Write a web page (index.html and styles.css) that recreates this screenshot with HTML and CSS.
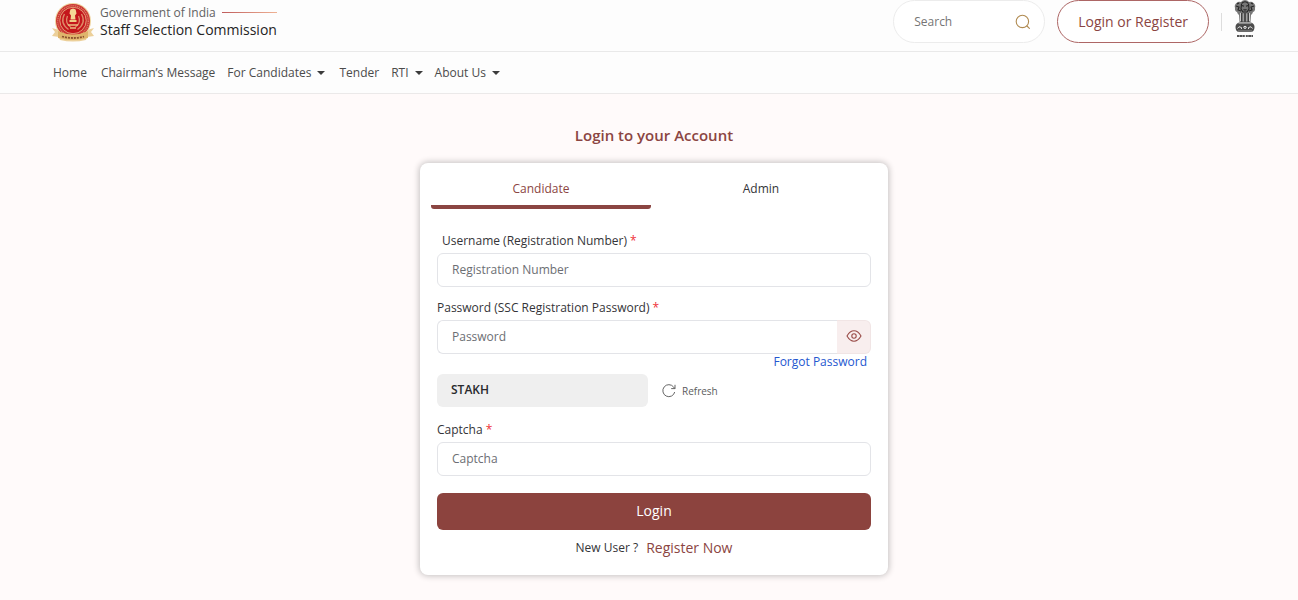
FILE: index.html
```html
<!DOCTYPE html>
<html lang="en">
<head>
<meta charset="utf-8">
<meta name="viewport" content="width=device-width, initial-scale=1">
<title>Staff Selection Commission - Login</title>
<link rel="stylesheet" href="styles.css">
</head>
<body>
<header class="topbar">
  <a class="brand" href="#">
    <svg class="seal" viewBox="0 0 44 40" aria-hidden="true">
      <path d="M8 28 1 26l3 4-3 4 7 1 1 3q13 3 26 0l1-3 7-1-3-4 3-4-7 2z" fill="#ecd09a"/>
      <circle cx="22" cy="19" r="18" fill="#efd49e"/>
      <circle cx="22" cy="19" r="17" fill="#cc3634"/>
      <circle cx="22" cy="19" r="15.300" fill="none" stroke="#dd8a6c" stroke-width="1.200" stroke-dasharray="1 1"/>
      <circle cx="22" cy="18.500" r="13.200" fill="#c4161c" stroke="#e9b988" stroke-width=".8"/>
      <path d="M13.500 12q-5 9 4 15.500M30.500 12q5 9-4 15.500M16.500 14q-3 7 3 11M27.500 14q3 7-3 11" fill="none" stroke="#de8a68" stroke-width="1.300"/>
      <path d="M19 9q0-2 1.500-2 1.500-1 3 0Q25 7 25 9l.5 2.500-1.500 2 .5 4h-5l.5-4-1.500-2z" fill="#f5d996"/>
      <path d="M18.500 18h7v2h-7z" fill="#f0ca84"/>
      <path d="M17 23h10M19 26h6" stroke="#eabc80" stroke-width="1.400"/>
      <path d="M7 29q15 7 30 0v7q-15 4-30 0z" fill="#dfb56c"/>
      <path d="M11 34.500q11 3 22 0" fill="none" stroke="#8b5230" stroke-width="1.800" stroke-dasharray="2 1"/>
    </svg>
    <span class="brand-text">
      <span class="brand-top">Government of India <i class="brand-line"></i></span>
      <span class="brand-name">Staff Selection Commission</span>
    </span>
  </a>
  <div class="actions">
    <form class="search" role="search">
      <input class="search-input" type="search" placeholder="Search" aria-label="Search">
      <button class="icon-button search-button" type="button" aria-label="Search">
        <svg width="16" height="16" viewBox="0 0 16 16" fill="none" stroke="#b08a50" stroke-width="1.1" stroke-linecap="round"><circle cx="7.4" cy="7.4" r="6.2"/><path d="m12 12 2.4 2.4"/></svg>
      </button>
    </form>
    <a class="login-link" href="#">Login or Register</a>
    <span class="divider"></span>
    <svg class="emblem" viewBox="0 0 22 38" role="img" aria-label="National emblem">
      <path d="M7 2q1.500-2 4-2t4 2q3-1 4.500 1Q22 5 21 8q.5 3-2 4-.5 2-2 3l-.5 7H5.500L5 15q-1.500-1-2-3Q.5 11 1 8 0 5 2.500 3 4 1 7 2z" fill="#777"/>
      <path d="M7.500 3.500Q11 0 14.500 3.500M8 5.500l2 .7m2 0 2-.7M9.500 9.500q1.500 1 3 0M7.500 4l-.5 5 2 3h4l2-3-.5-5M2 6l3 1-1 3 3 1M20 6l-3 1 1 3-3 1M3 4l2-1M19 4l-2-1" fill="none" stroke="#262626" stroke-width="1.100"/>
      <path d="M6.500 13v8M9 13.500V21M13 13.500V21M15.500 13v8" stroke="#d4d4d4" stroke-width=".9"/>
      <path d="M7.800 13v9M11 13v9M14.200 13v9" stroke="#333" stroke-width="1.200"/>
      <path d="M5 22.500h12q3.500 1 3.500 4.500 0 5-4 5h-11q-4 0-4-5 0-3.500 3.500-4.500z" fill="#4c4c4c"/>
      <path d="M4.500 23.500h13M4 31h14" stroke="#aaa" stroke-width=".7"/>
      <circle cx="11" cy="27.300" r="2.100" fill="#eee" stroke="#222" stroke-width=".8"/>
      <circle cx="11" cy="27.300" r=".6" fill="#333"/>
      <path d="M3.500 28.500q1-3 4-1v1.500M18.500 28.500q-1-3-4-1v1.500" fill="none" stroke="#ddd"/>
      <path d="M3 36h16" stroke="#555" stroke-width="1.800" stroke-dasharray="2 .4 3 .4 2 1"/>
    </svg>
  </div>
</header>
<nav class="nav" aria-label="Main">
  <a class="nav-link nav-spaced" href="#">Home</a>
  <a class="nav-link" href="#">Chairman’s Message</a>
  <a class="nav-link nav-spaced" href="#">For Candidates <i class="caret"></i></a>
  <a class="nav-link" href="#">Tender</a>
  <a class="nav-link" href="#">RTI <i class="caret"></i></a>
  <a class="nav-link" href="#">About Us <i class="caret"></i></a>
</nav>
<main class="main">
  <h1 class="title">Login to your Account</h1>
  <section class="card">
    <div class="tabs" role="tablist">
      <button class="tab tab-active" type="button" role="tab" aria-selected="true">Candidate</button>
      <button class="tab" type="button" role="tab" aria-selected="false">Admin</button>
    </div>
    <form class="form">
      <label class="label label-inset" for="username">Username (Registration Number) <span class="required">*</span></label>
      <input class="field" id="username" type="text" placeholder="Registration Number">
      <label class="label label-next" for="password">Password (SSC Registration Password) <span class="required">*</span></label>
      <div class="password">
        <input class="field password-field" id="password" type="password" placeholder="Password">
        <button class="icon-button reveal" type="button" aria-label="Show password">
          <svg width="16" height="12" viewBox="0 0 16 12" fill="none" stroke="#994c48" stroke-width="1.1"><path d="M1 6Q4 .8 8 .8T15 6Q12 11.200 8 11.200T1 6z"/><circle cx="8" cy="6" r="2.200"/></svg>
        </button>
      </div>
      <a class="forgot" href="#">Forgot Password</a>
      <div class="captcha-row">
        <output class="captcha-code">STAKH</output>
        <button class="icon-button refresh" type="button">
          <svg width="14" height="14" viewBox="0 0 14 14" fill="none" stroke="#666" stroke-width="1"><path d="M12.700 8A6 6 0 1 1 11.600 3L13 4.600M13 .8v3.800H9.200"/></svg>
          Refresh
        </button>
      </div>
      <label class="label label-captcha" for="captcha">Captcha <span class="required">*</span></label>
      <input class="field" id="captcha" type="text" placeholder="Captcha">
      <button class="submit" type="button">Login</button>
      <p class="register">New User ? <a class="register-link" href="#">Register Now</a></p>
    </form>
  </section>
</main>
</body>
</html>
```
FILE: styles.css
```css
* { box-sizing: border-box; }
body {
  margin: 0;
  min-height: 100vh;
  background: #fffafa;
  color: #343438;
  font-family: "Open Sans", "Noto Sans", sans-serif;
  font-size: 12px;
  line-height: 20px;
}
a { color: inherit; text-decoration: none; }
button, input { font: inherit; color: inherit; }
.topbar {
  display: flex;
  align-items: flex-start;
  justify-content: space-between;
  height: 52px;
  padding: 0 42px 0 51px;
  background: #fdfdfd;
  border-bottom: 1px solid #e9e9e9;
}
.brand { display: flex; gap: 5px; padding-top: 2px; }
.seal { width: 44px; height: 40px; }
.brand-text { display: flex; flex-direction: column; padding-top: 2px; line-height: 17px; }
.brand-top { display: flex; align-items: center; gap: 6px; color: #626262; }
.brand-line { flex: 1; height: 1px; background: linear-gradient(90deg, #bf5c5c, #efb294); }
.brand-name { font-size: 14px; font-weight: 500; color: #242424; }
.actions { display: flex; align-items: center; }
.search {
  display: flex;
  align-items: center;
  width: 152px;
  height: 43px;
  padding: 0 13px 0 20px;
  background: #fff;
  border: 1px solid #ececec;
  border-radius: 22px;
}
.search-input { flex: 1; min-width: 0; padding: 0; border: 0; outline: 0; background: none; }
.search-input::placeholder { color: #757575; opacity: 1; }
.icon-button { display: flex; align-items: center; justify-content: center; padding: 0; border: 0; background: none; }
.login-link {
  margin-left: 12px;
  padding: 0 20px;
  line-height: 41px;
  border: 1px solid #ad6665;
  border-radius: 22px;
  background: #fff;
  color: #8b4542;
  font-size: 14px;
  font-weight: 500;
}
.divider { width: 1px; height: 18px; margin: 0 12px; background: #ddd; }
.emblem { align-self: flex-start; width: 22px; height: 38px; }
.nav {
  display: flex;
  align-items: center;
  gap: 12px;
  height: 42px;
  padding: 0 53px;
  background: #fdfdfd;
  border-bottom: 1px solid #ebe9e9;
  color: #4b4b4b;
}
.nav-link { display: flex; align-items: center; gap: 6px; }
.nav-spaced { margin-right: 2px; }
.caret { border: 4px solid transparent; border-top-color: #3c3c3c; border-bottom: 0; }
.main { display: flex; flex-direction: column; align-items: center; padding: 31px 42px 24px 52px; }
.title { margin: 0 0 18px; color: #8b4542; font-size: 15px; line-height: 20px; font-weight: 600; }
.card {
  width: 100%;
  max-width: 468px;
  padding-bottom: 17px;
  background: #fff;
  border-radius: 8px;
  box-shadow: 0 0 6px 1px #c4c0c0;
}
.tabs { display: flex; padding: 0 17px 0 11px; }
.tab { flex: 1; padding: 16px 0 6px; border: 0; border-bottom: 4px solid transparent; background: none; font-weight: 500; }
.tab-active {
  color: #8b4542;
  background: linear-gradient(#8b4542, #8b4542) bottom / 100% 4px no-repeat border-box;
  border-radius: 3px;
}
.form { display: flex; flex-direction: column; padding: 22px 17px 0; }
.label { margin-bottom: 2px; }
.label-inset { padding-left: 5px; }
.label-next { margin-top: 11px; }
.label-captcha { margin-top: 13px; }
.required { color: #ef3038; }
.field { width: 100%; height: 34px; padding: 0 14px 2px; border: 1px solid #e3e4e8; border-radius: 6px; outline: 0; background: #fff; }
.field::placeholder { color: #6c6e73; opacity: 1; }
.password { display: flex; }
.password-field { flex: 1; border-right: 0; border-radius: 6px 0 0 6px; }
.reveal { width: 34px; padding-bottom: 2px; background: #f8eeee; border: 1px solid #f1e5e5; border-left: 0; border-radius: 0 6px 6px 0; }
.forgot { align-self: flex-end; margin-right: 4px; line-height: 16px; color: #2457d0; }
.captcha-row { display: flex; align-items: center; gap: 14px; margin-top: 4px; }
.captcha-code { width: 211px; padding: 6px 14px 7px; border-radius: 6px; background: #efefef; color: #29292d; font-weight: 600; }
.refresh { gap: 6px; color: #5c5c5c; font-size: 10px; }
.submit { height: 37px; margin-top: 17px; padding: 0 0 2px; border: 0; border-radius: 6px; background: #8c433e; color: #fff; font-size: 14px; font-weight: 500; }
.register { display: flex; justify-content: center; gap: 8px; margin: 8px 0 0; }
.register-link { color: #8b4542; font-size: 14px; font-weight: 500; }
```
